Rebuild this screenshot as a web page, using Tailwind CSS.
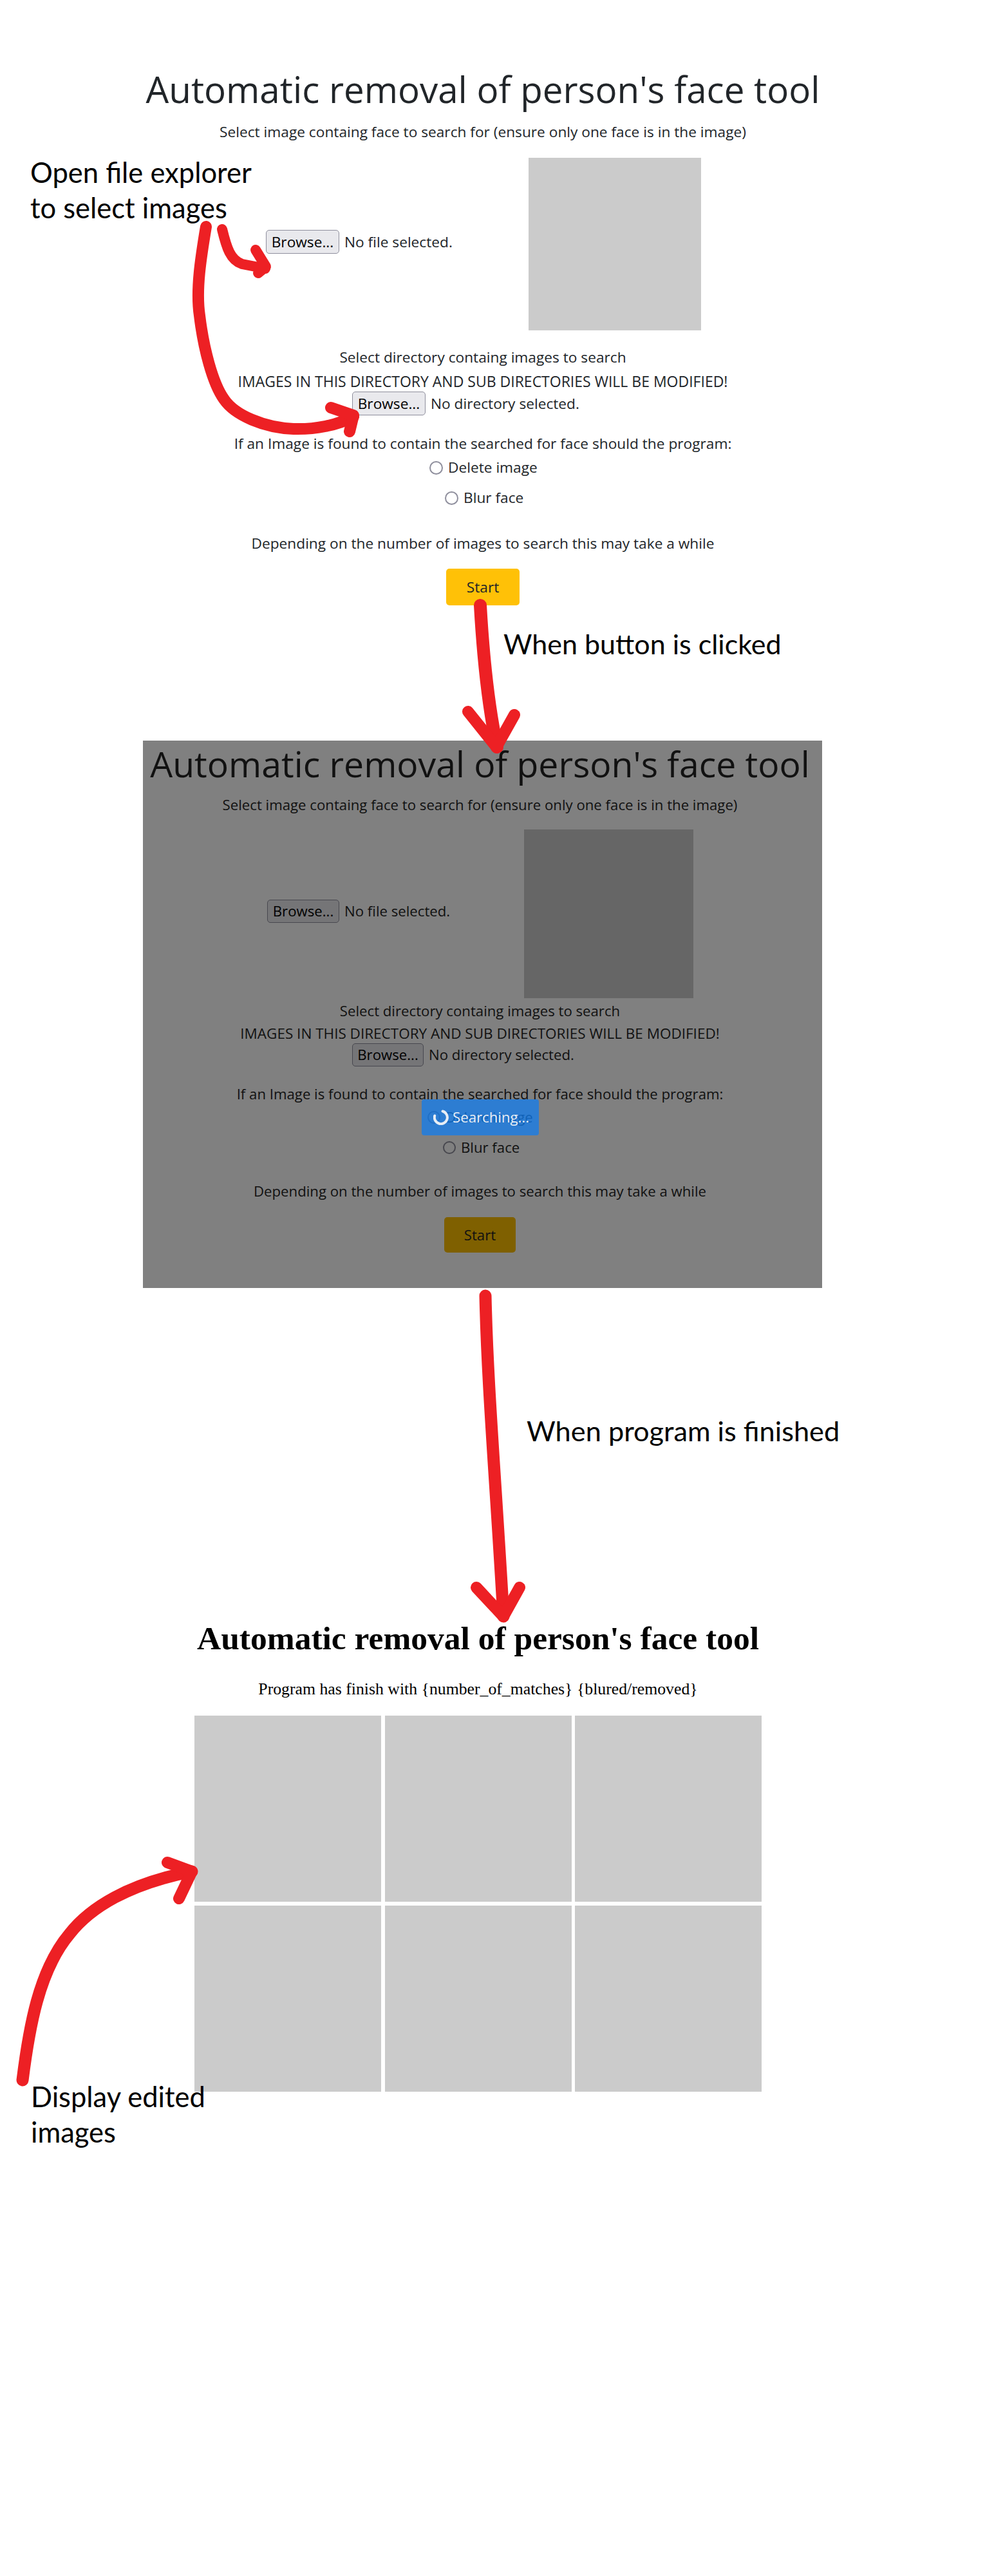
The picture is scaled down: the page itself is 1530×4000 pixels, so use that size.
<!DOCTYPE html>
<html lang="en">
<head>
  <meta charset="UTF-8">
  <title>Automatic removal of person's face tool - mockup</title>
  <script src="https://cdn.jsdelivr.net/npm/@tailwindcss/browser@4"></script>
</head>
<body class="bg-white">
<div class="relative w-[1530px] h-[4000px] overflow-hidden font-['Open_Sans',sans-serif]">

  <!-- Step 1: the form -->
  <section class="ml-[222px] w-[1056px] pt-[104px] text-center text-[#212529] text-[22.7px] leading-[26px]">
    <h1 class="whitespace-nowrap text-[56.5px] leading-[70px] font-normal">Automatic removal of person's face tool</h1>
    <p class="mt-[16px] leading-[30px]">Select image containg face to search for (ensure only one face is in the image)</p>
    <div class="mt-[25px] flex items-start pl-[191px]">
      <div class="mt-[112px] flex items-center gap-2">
        <button class="h-[37px] w-[114px] rounded-[5px] border border-[#8f8f9d] bg-[#e9e9ed] text-black">Browse...</button>
        <span>No file selected.</span>
      </div>
      <div class="ml-auto mr-[189px] h-[268px] w-[268px] bg-[#cbcbcb]"></div>
    </div>
    <p class="mt-[29px]">Select directory containg images to search</p>
    <p class="mt-[11px] text-[23px]">IMAGES IN THIS DIRECTORY AND SUB DIRECTORIES WILL BE MODIFIED!</p>
    <div class="mt-[3px] flex items-center gap-2 pl-[325px]">
      <button class="h-[37px] w-[114px] rounded-[5px] border border-[#8f8f9d] bg-[#e9e9ed] text-black">Browse...</button>
      <span>No directory selected.</span>
    </div>
    <p class="mt-[31px]">If an Image is found to contain the searched for face should the program:</p>
    <label class="mt-[9px] flex h-[30px] items-center gap-2 pl-[445px]">
      <input type="radio" class="h-[21px] w-[21px] appearance-none rounded-full border-2 border-[#8f8f9d]">Delete image
    </label>
    <label class="mt-[17px] flex h-[30px] items-center gap-2 pl-[469px]">
      <input type="radio" class="h-[21px] w-[21px] appearance-none rounded-full border-2 border-[#8f8f9d]">Blur face
    </label>
    <p class="mt-[43px]">Depending on the number of images to search this may take a while</p>
    <button class="mx-auto mt-[26px] block h-[57px] w-[114px] rounded-[5px] bg-[#ffc107]">Start</button>
  </section>

  <!-- Step 2: searching, page dimmed -->
  <section class="relative ml-[222px] mt-[210px] h-[850px] w-[1055px] bg-[#808080] pr-[8px] pt-[1px] text-center text-[#111] text-[22.2px] leading-[26px]">
    <h1 class="whitespace-nowrap text-[55.3px] leading-[70px] font-normal">Automatic removal of person's face tool</h1>
    <p class="mt-[14px] leading-[30px]">Select image containg face to search for (ensure only one face is in the image)</p>
    <div class="mt-[23px] flex items-start pl-[193px]">
      <div class="mt-[109px] flex items-center gap-2">
        <button class="h-[36px] w-[112px] rounded-[5px] border border-[#48484f] bg-[#757577] text-black">Browse...</button>
        <span>No file selected.</span>
      </div>
      <div class="ml-auto mr-[192px] h-[262px] w-[263px] bg-[#666666]"></div>
    </div>
    <p class="mt-[7px]">Select directory containg images to search</p>
    <p class="mt-[9px] text-[22.5px]">IMAGES IN THIS DIRECTORY AND SUB DIRECTORIES WILL BE MODIFIED!</p>
    <div class="mt-[2px] flex items-center gap-2 pl-[325px]">
      <button class="h-[36px] w-[111px] rounded-[5px] border border-[#48484f] bg-[#757577] text-black">Browse...</button>
      <span>No directory selected.</span>
    </div>
    <p class="mt-[30px]">If an Image is found to contain the searched for face should the program:</p>
    <label class="mt-[8px] flex h-[30px] items-center gap-2 pl-[442px]">
      <input type="radio" class="h-[20px] w-[20px] appearance-none rounded-full border-2 border-[#48484f]">Delete image
    </label>
    <label class="mt-[17px] flex h-[30px] items-center gap-2 pl-[466px]">
      <input type="radio" class="h-[20px] w-[20px] appearance-none rounded-full border-2 border-[#48484f]">Blur face
    </label>
    <p class="mt-[40px]">Depending on the number of images to search this may take a while</p>
    <button class="mx-auto mt-[27px] block h-[55px] w-[111px] rounded-[5px] bg-[#7f6000]">Start</button>

    <!-- spinner sits over the radio row, the row shows through -->
    <div class="absolute left-[433px] top-[557px] flex h-[56px] w-[182px] items-center gap-[6px] rounded-[4px] bg-[#117ced]/75 pl-[18px] text-[#e8eef5]">
      <svg width="24" height="24" viewBox="0 0 24 24" fill="none" stroke="#e8eef5" stroke-width="4" stroke-linecap="round"><path d="M14.5 2.5a10 10 0 1 1-12.3 7"/></svg>
      <span>Searching...</span>
    </div>
  </section>

  <!-- Step 3: results -->
  <section class="ml-[302px] mt-[514px] w-[881px] text-center font-['Liberation_Serif',serif] text-black">
    <h1 class="whitespace-nowrap text-[51.5px] leading-[60px] font-bold">Automatic removal of person's face tool</h1>
    <p class="mt-[34px] text-[25.75px] leading-[30px]">Program has finish with {number_of_matches} {blured/removed}</p>
    <div class="mt-[26px] grid grid-cols-3 gap-x-[5.5px] gap-y-[6px]">
      <div class="h-[289px] bg-[#cbcbcb]"></div>
      <div class="h-[289px] bg-[#cbcbcb]"></div>
      <div class="h-[289px] bg-[#cbcbcb]"></div>
      <div class="h-[289px] bg-[#cbcbcb]"></div>
      <div class="h-[289px] bg-[#cbcbcb]"></div>
      <div class="h-[289px] bg-[#cbcbcb]"></div>
    </div>
  </section>

  <!-- Annotations drawn on top of the mockups -->
  <p class="absolute left-[47px] top-[240px] font-['Lato',sans-serif] text-[43.5px] leading-[55px] text-black">Open file explorer<br>to select images</p>
  <p class="absolute left-[782px] top-[972px] font-['Lato',sans-serif] text-[43px] leading-[55px] text-black">When button is clicked</p>
  <p class="absolute left-[818px] top-[2194px] font-['Lato',sans-serif] text-[43.3px] leading-[55px] text-black">When program is finished</p>
  <p class="absolute left-[48px] top-[3228px] font-['Lato',sans-serif] text-[43.5px] leading-[55px] text-black">Display edited<br>images</p>

  <svg class="absolute left-0 top-0" width="1530" height="4000" fill="none" stroke="#ed2024" stroke-linecap="round" stroke-linejoin="round">
    <!-- file explorer -> first browse -->
    <path stroke-width="16" d="M345 356C352 385 358 404 376 410L412 417"/>
    <path stroke-width="16" d="M397 388L413 414L401 424"/>
    <!-- file explorer -> second browse -->
    <path stroke-width="18" d="M320 352C312 400 304 450 310 490C316 540 330 595 348 620C365 645 410 664 456 666C490 667 525 660 549 647"/>
    <path stroke-width="18" d="M514 633L549 645L543 670"/>
    <!-- start -> overlay -->
    <path stroke-width="20" d="M746 940C750 1010 757 1090 772 1160"/>
    <path stroke-width="18" d="M727 1105L771 1160L799 1110"/>
    <!-- overlay -> results -->
    <path stroke-width="19" d="M754 2012C757 2150 770 2300 782 2510"/>
    <path stroke-width="18" d="M740 2465L782 2510L807 2465"/>
    <!-- results arrow -->
    <path stroke-width="19" d="M35 3230C45 3150 60 3060 108 3003C140 2962 200 2925 298 2906"/>
    <path stroke-width="18" d="M260 2892L298 2906L278 2948"/>
  </svg>
</div>
</body>
</html>
